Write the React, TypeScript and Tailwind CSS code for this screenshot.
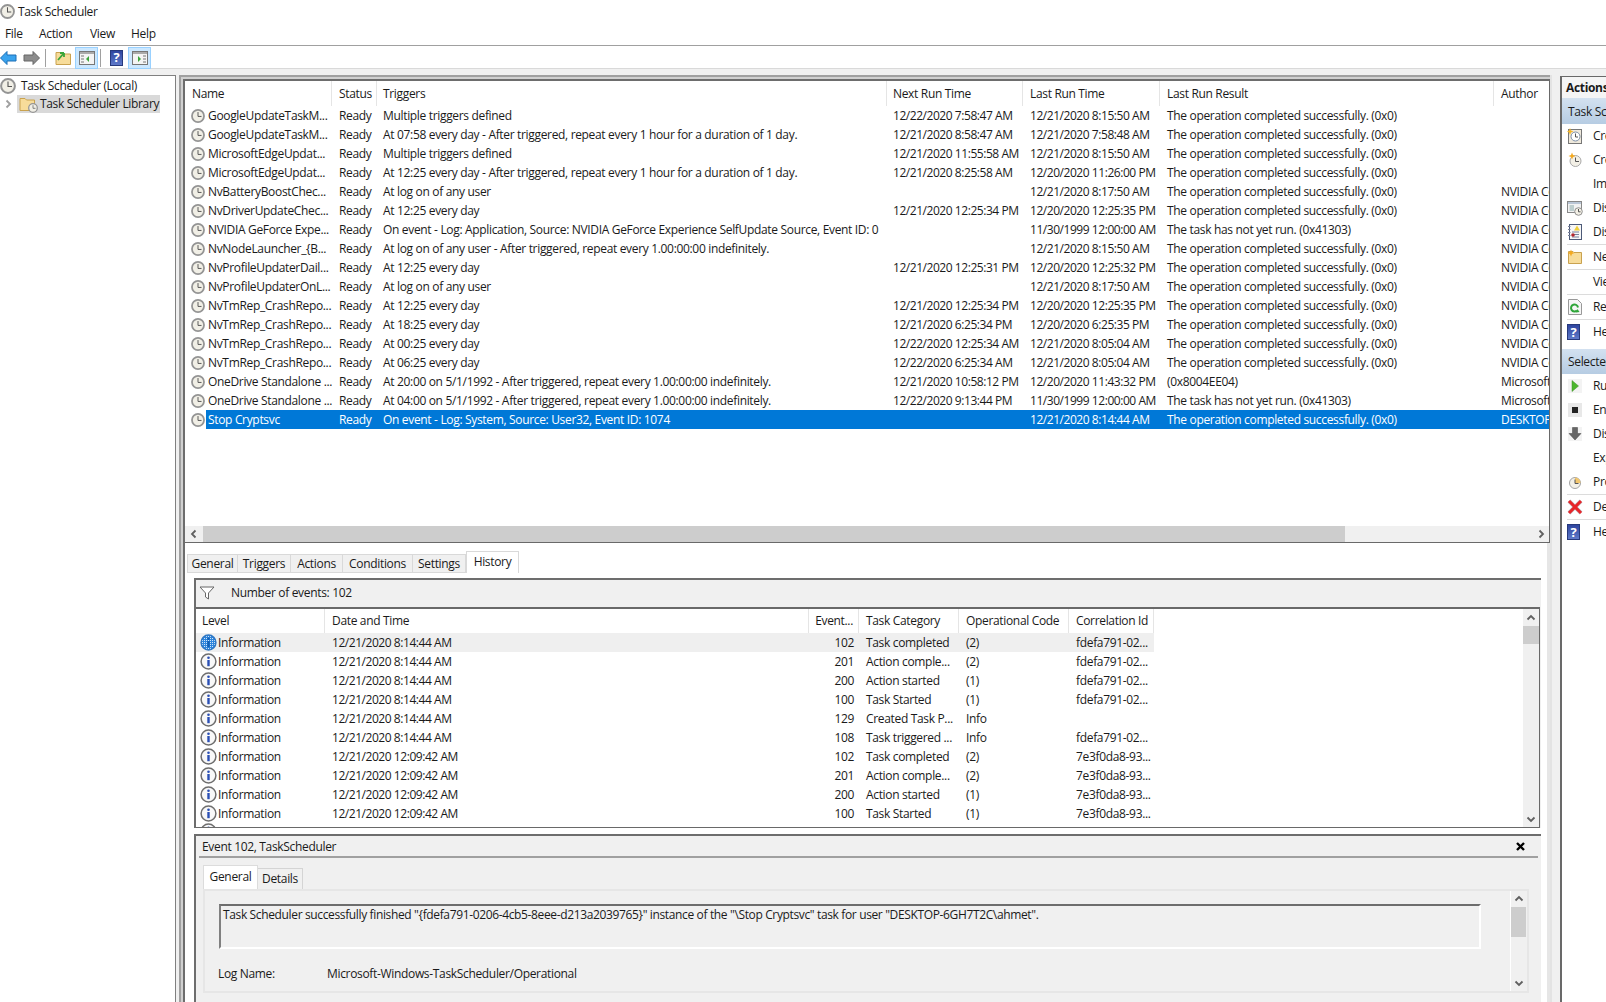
import type { ReactNode } from 'react';

const tasks = [
  ['GoogleUpdateTaskM...', 'Multiple triggers defined', '12/22/2020 7:58:47 AM', '12/21/2020 8:15:50 AM', 'The operation completed successfully. (0x0)', ''],
  ['GoogleUpdateTaskM...', 'At 07:58 every day - After triggered, repeat every 1 hour for a duration of 1 day.', '12/21/2020 8:58:47 AM', '12/21/2020 7:58:48 AM', 'The operation completed successfully. (0x0)', ''],
  ['MicrosoftEdgeUpdat...', 'Multiple triggers defined', '12/21/2020 11:55:58 AM', '12/21/2020 8:15:50 AM', 'The operation completed successfully. (0x0)', ''],
  ['MicrosoftEdgeUpdat...', 'At 12:25 every day - After triggered, repeat every 1 hour for a duration of 1 day.', '12/21/2020 8:25:58 AM', '12/20/2020 11:26:00 PM', 'The operation completed successfully. (0x0)', ''],
  ['NvBatteryBoostChec...', 'At log on of any user', '', '12/21/2020 8:17:50 AM', 'The operation completed successfully. (0x0)', 'NVIDIA Corporation'],
  ['NvDriverUpdateChec...', 'At 12:25 every day', '12/21/2020 12:25:34 PM', '12/20/2020 12:25:35 PM', 'The operation completed successfully. (0x0)', 'NVIDIA Corporation'],
  ['NVIDIA GeForce Expe...', 'On event - Log: Application, Source: NVIDIA GeForce Experience SelfUpdate Source, Event ID: 0', '', '11/30/1999 12:00:00 AM', 'The task has not yet run. (0x41303)', 'NVIDIA Corporation'],
  ['NvNodeLauncher_{B...', 'At log on of any user - After triggered, repeat every 1.00:00:00 indefinitely.', '', '12/21/2020 8:15:50 AM', 'The operation completed successfully. (0x0)', 'NVIDIA Corporation'],
  ['NvProfileUpdaterDail...', 'At 12:25 every day', '12/21/2020 12:25:31 PM', '12/20/2020 12:25:32 PM', 'The operation completed successfully. (0x0)', 'NVIDIA Corporation'],
  ['NvProfileUpdaterOnL...', 'At log on of any user', '', '12/21/2020 8:17:50 AM', 'The operation completed successfully. (0x0)', 'NVIDIA Corporation'],
  ['NvTmRep_CrashRepo...', 'At 12:25 every day', '12/21/2020 12:25:34 PM', '12/20/2020 12:25:35 PM', 'The operation completed successfully. (0x0)', 'NVIDIA Corporation'],
  ['NvTmRep_CrashRepo...', 'At 18:25 every day', '12/21/2020 6:25:34 PM', '12/20/2020 6:25:35 PM', 'The operation completed successfully. (0x0)', 'NVIDIA Corporation'],
  ['NvTmRep_CrashRepo...', 'At 00:25 every day', '12/22/2020 12:25:34 AM', '12/21/2020 8:05:04 AM', 'The operation completed successfully. (0x0)', 'NVIDIA Corporation'],
  ['NvTmRep_CrashRepo...', 'At 06:25 every day', '12/22/2020 6:25:34 AM', '12/21/2020 8:05:04 AM', 'The operation completed successfully. (0x0)', 'NVIDIA Corporation'],
  ['OneDrive Standalone ...', 'At 20:00 on 5/1/1992 - After triggered, repeat every 1.00:00:00 indefinitely.', '12/21/2020 10:58:12 PM', '12/20/2020 11:43:32 PM', '(0x8004EE04)', 'Microsoft Corporation'],
  ['OneDrive Standalone ...', 'At 04:00 on 5/1/1992 - After triggered, repeat every 1.00:00:00 indefinitely.', '12/22/2020 9:13:44 PM', '11/30/1999 12:00:00 AM', 'The task has not yet run. (0x41303)', 'Microsoft Corporation'],
  ['Stop Cryptsvc', 'On event - Log: System, Source: User32, Event ID: 1074', '', '12/21/2020 8:14:44 AM', 'The operation completed successfully. (0x0)', 'DESKTOP-6GH7T2C\\ahmet'],
];

const events = [
  ['12/21/2020 8:14:44 AM', '102', 'Task completed', '(2)', 'fdefa791-02...'],
  ['12/21/2020 8:14:44 AM', '201', 'Action comple...', '(2)', 'fdefa791-02...'],
  ['12/21/2020 8:14:44 AM', '200', 'Action started', '(1)', 'fdefa791-02...'],
  ['12/21/2020 8:14:44 AM', '100', 'Task Started', '(1)', 'fdefa791-02...'],
  ['12/21/2020 8:14:44 AM', '129', 'Created Task P...', 'Info', ''],
  ['12/21/2020 8:14:44 AM', '108', 'Task triggered ...', 'Info', 'fdefa791-02...'],
  ['12/21/2020 12:09:42 AM', '102', 'Task completed', '(2)', '7e3f0da8-93...'],
  ['12/21/2020 12:09:42 AM', '201', 'Action comple...', '(2)', '7e3f0da8-93...'],
  ['12/21/2020 12:09:42 AM', '200', 'Action started', '(1)', '7e3f0da8-93...'],
  ['12/21/2020 12:09:42 AM', '100', 'Task Started', '(1)', '7e3f0da8-93...'],
];

function Clock({ size = 14 }: { size?: number }) {
  return (
    <svg width={size} height={size} viewBox="0 0 16 16" className="shrink-0">
      <circle cx="8" cy="8" r="6.9" fill="#f1efe6" stroke="#949494" strokeWidth="2" />
      <path d="M8 3.5V8.5H12" fill="none" stroke="#555" strokeWidth="1.1" />
    </svg>
  );
}

function InfoIcon({ selected }: { selected?: boolean }) {
  return (
    <svg width="17" height="17" viewBox="0 0 17 17" className="shrink-0">
      <defs>
        <pattern id="dots" width="2" height="2" patternUnits="userSpaceOnUse">
          <rect width="2" height="2" fill="#2f86dd" />
          <rect width="1" height="1" fill="#cfe4f8" />
        </pattern>
      </defs>
      <circle cx="8.5" cy="8.5" r="7.4" fill={selected ? 'url(#dots)' : '#f8f8f8'} stroke={selected ? '#2f78c4' : '#6e6e6e'} strokeWidth="1.5" />
      <circle cx="8.5" cy="4.8" r="1.3" fill={selected ? '#0f5fb5' : '#2a4fb5'} />
      <rect x="7.3" y="7" width="2.4" height="6.2" fill={selected ? '#0f5fb5' : '#2a4fb5'} />
    </svg>
  );
}

function HelpBook({ w = 13, h = 16 }: { w?: number; h?: number }) {
  return (
    <span
      style={{ width: w, height: h }}
      className="flex shrink-0 items-center justify-center border border-[#27397c] bg-gradient-to-b from-[#2f45a0] to-[#5f79c9] text-[13px] leading-none font-bold text-white"
    >
      ?
    </span>
  );
}

function PaneToggle({ right }: { right?: boolean }) {
  return (
    <span className="flex h-[22px] w-[23px] items-center justify-center border border-[#99d1ff] bg-[#cce8ff]">
      <svg width="16" height="14" viewBox="0 0 16 14">
        <rect x="0.5" y="0.5" width="15" height="13" fill="#f4f4f4" stroke="#777" />
        <rect x="1" y="1" width="14" height="2" fill="#aaa" />
        <path d={right ? 'M6 5L9 8L6 11Z' : 'M10 5L7 8L10 11Z'} fill="#3aa53a" />
        <path d={right ? 'M11 5H14M11 8H14M11 11H14' : 'M2 5H5M2 8H5M2 11H5'} stroke="#777" />
      </svg>
    </span>
  );
}

function Chevron({ dir }: { dir: 'up' | 'down' | 'left' | 'right' }) {
  const d = {
    up: 'M1.5 6.5L5 3L8.5 6.5',
    down: 'M1.5 3.5L5 7L8.5 3.5',
    left: 'M6.5 1.5L3 5L6.5 8.5',
    right: 'M3.5 1.5L7 5L3.5 8.5',
  }[dir];
  return (
    <svg width="10" height="10" viewBox="0 0 10 10" className="shrink-0">
      <path d={d} fill="none" stroke="#606060" strokeWidth="1.8" />
    </svg>
  );
}

function Folder({ children }: { children?: ReactNode }) {
  return (
    <svg width="17" height="16" viewBox="0 0 17 16" className="shrink-0">
      <path d="M1 2.5H6L7.5 4H15.5V14.5H1Z" fill="#f7dc9a" stroke="#c9a24f" />
      {children}
    </svg>
  );
}

function ActionIcon({ name }: { name: string }) {
  switch (name) {
    case 'basic':
      return (
        <svg width="16" height="16" viewBox="0 0 16 16">
          <rect x="1.5" y="1.5" width="13" height="14" fill="#efe9dc" stroke="#777" />
          <circle cx="8.5" cy="8.5" r="4.5" fill="#fff" stroke="#7b8ea6" />
          <path d="M8.5 5.5V9H11" fill="none" stroke="#555" />
          <path d="M3 0L4 2.5L6.5 3.5L4 4.5L3 7L2 4.5L0 3.5L2 2.5Z" fill="#f4b72c" />
        </svg>
      );
    case 'task':
      return (
        <svg width="16" height="16" viewBox="0 0 16 16">
          <circle cx="8.5" cy="9" r="5.5" fill="#f3f0e6" stroke="#a9a9a9" />
          <path d="M8.5 5.5V9.5H12" fill="none" stroke="#555" />
          <path d="M5 0.5L6 3L8.5 4L6 5L5 7.5L4 5L1.5 4L4 3Z" fill="#f4a91f" />
        </svg>
      );
    case 'running':
      return (
        <svg width="16" height="16" viewBox="0 0 16 16">
          <rect x="0.5" y="1.5" width="14" height="11" fill="#f2f2f2" stroke="#888" />
          <rect x="1" y="2" width="13" height="2" fill="#b9c6d6" />
          <path d="M2.5 6H7M2.5 8H7M2.5 10H7" stroke="#8aa" />
          <circle cx="11.5" cy="11.5" r="3.8" fill="#f3f0e6" stroke="#8f8f8f" />
          <path d="M11.5 9V11.8H13.5" fill="none" stroke="#555" />
        </svg>
      );
    case 'history':
      return (
        <svg width="16" height="16" viewBox="0 0 16 16">
          <rect x="2.5" y="0.5" width="12" height="15" fill="#f7f7f7" stroke="#4d5a78" />
          <path d="M1 2.5H3.5M1 5.5H3.5M1 8.5H3.5M1 11.5H3.5M5 8H12M5 10.5H12M5 13H12" stroke="#77809a" />
          <path d="M10 1.5L13 6.5H7Z" fill="#f0cf3a" />
          <circle cx="6" cy="11" r="1.8" fill="#b3282d" />
        </svg>
      );
    case 'folder':
      return (
        <svg width="16" height="16" viewBox="0 0 16 16">
          <path d="M1.5 2.5H6L7 3.5H14.5V14.5H1.5Z" fill="#f7dc9a" stroke="#c9a24f" />
          <path d="M4 0.5L5 3L7.5 4L5 5L4 7.5L3 5L0.5 4L3 3Z" fill="#f4a91f" />
        </svg>
      );
    case 'refresh':
      return (
        <svg width="16" height="16" viewBox="0 0 16 16">
          <path d="M1.5 0.5H10.5L14.5 4.5V15.5H1.5Z" fill="#f6f6f6" stroke="#999" />
          <path d="M11 8.5A3.5 3.5 0 1 0 10 11.5" fill="none" stroke="#2fa63a" strokeWidth="2" />
          <path d="M9 13.5L12.5 13L10.5 10Z" fill="#2fa63a" />
        </svg>
      );
    case 'help':
      return <HelpBook w={13} h={16} />;
    case 'run':
      return (
        <svg width="16" height="16" viewBox="0 0 16 16">
          <rect width="14" height="14" x="1" y="1" fill="#f3f3f3" />
          <path d="M5 2.5L11.5 8L5 13.5Z" fill="#4cb62e" stroke="#3c8f25" strokeWidth="0.5" />
        </svg>
      );
    case 'end':
      return (
        <svg width="16" height="16" viewBox="0 0 16 16">
          <rect width="14" height="14" x="1" y="1" fill="#e8e8e8" />
          <rect x="5" y="5" width="6" height="6" fill="#222" />
        </svg>
      );
    case 'disable':
      return (
        <svg width="16" height="16" viewBox="0 0 16 16">
          <rect width="14" height="14" x="1" y="1" fill="#f3f3f3" />
          <path d="M5.5 1.5H10.5V7.5H14L8 14L2 7.5H5.5Z" fill="#666" stroke="#444" strokeWidth="0.5" />
        </svg>
      );
    case 'props':
      return (
        <svg width="16" height="16" viewBox="0 0 16 16">
          <circle cx="8" cy="9" r="5.5" fill="#f3f0e6" stroke="#a3a3a3" />
          <path d="M8 3.5A5.5 5.5 0 0 1 13.5 9H8Z" fill="#f2c66d" />
          <path d="M8 5.5V9.5H11.5" fill="none" stroke="#555" />
        </svg>
      );
    case 'delete':
      return (
        <svg width="16" height="16" viewBox="0 0 16 16">
          <path d="M2 2L14 14M14 2L2 14" stroke="#b9bcc2" strokeWidth="4" />
          <path d="M2 2L14 14M14 2L2 14" stroke="#e8262a" strokeWidth="3" />
        </svg>
      );
    default:
      return null;
  }
}

const mainActions: [string, string, boolean?][] = [
  ['basic', 'Create Basic Task...'],
  ['task', 'Create Task...'],
  ['', 'Import Task...'],
  ['running', 'Display All Running Tasks'],
  ['history', 'Disable All Tasks History', true],
  ['folder', 'New Folder...', true],
  ['', 'View', true],
  ['refresh', 'Refresh', true],
  ['help', 'Help'],
];

const selectedActions: [string, string, boolean?][] = [
  ['run', 'Run'],
  ['end', 'End'],
  ['disable', 'Disable'],
  ['', 'Export...'],
  ['props', 'Properties', true],
  ['delete', 'Delete', true],
  ['help', 'Help'],
];

function ActionList({ items }: { items: [string, string, boolean?][] }) {
  return (
    <div>
      {items.map(([icon, label, sep], i) => (
        <div key={i}>
          <div className="flex h-[24px] items-center pl-[5px]">
            <span className="flex w-[26px] shrink-0 items-center">{icon && <ActionIcon name={icon} />}</span>
            <span className="whitespace-nowrap">{label}</span>
          </div>
          {sep && <div className="ml-[5px] h-px bg-[#dcdcdc]" />}
        </div>
      ))}
    </div>
  );
}

export default function App() {
  return (
    <div className="flex h-[1002px] w-[1606px] flex-col overflow-hidden bg-white font-['Open_Sans',sans-serif] text-[12px] tracking-[-0.33px] text-[#1a1a1a]">
      <div className="flex h-[23px] items-center gap-[3px]">
        <Clock size={15} />
        <span>Task Scheduler</span>
      </div>

      <div className="flex h-[23px] items-center border-b border-[#a0a0a0] pl-[5px]">
        <span className="w-[34px]">File</span>
        <span className="w-[51px]">Action</span>
        <span className="w-[41px]">View</span>
        <span>Help</span>
      </div>

      <div className="flex h-[23px] items-center border-b border-[#d9d9d9] pt-[1px]">
        <svg width="17" height="14" viewBox="0 0 17 14">
          <path d="M7 0.5V4H16V10H7V13.5L0.5 7Z" fill="#39a3ee" stroke="#1c6fb5" />
        </svg>
        <svg width="17" height="14" viewBox="0 0 17 14" className="ml-[6px]">
          <path d="M10 0.5V4H1V10H10V13.5L16.5 7Z" fill="#8d8d8d" stroke="#666" />
        </svg>
        <span className="ml-[5px] h-[18px] w-px bg-[#a0a0a0]" />
        <span className="ml-[9px]">
          <Folder>
            <path d="M3 10L9 3M9 3H5M9 3V7" fill="none" stroke="#3aa53a" strokeWidth="1.8" />
          </Folder>
        </span>
        <span className="ml-[3px]">
          <PaneToggle />
        </span>
        <span className="ml-[2px] h-[18px] w-px bg-[#a0a0a0]" />
        <span className="ml-[9px]">
          <HelpBook w={13} h={16} />
        </span>
        <span className="ml-[5px]">
          <PaneToggle right />
        </span>
      </div>

      <div className="flex min-h-0 flex-1 bg-[#f0f0f0] pt-[6px]">
        <div className="w-[176px] shrink-0 border-t border-r border-[#808080] bg-white pt-[1px]">
          <div className="flex h-[18px] items-center gap-[5px]">
            <Clock size={16} />
            <span>Task Scheduler (Local)</span>
          </div>
          <div className="flex h-[18px] items-center">
            <span className="flex w-[15px] justify-center opacity-60">
              <Chevron dir="right" />
            </span>
            <div className="ml-[2px] flex h-[18px] w-[143px] items-center gap-[4px] bg-[#d9d9d9] pl-[2px]">
              <span className="relative">
                <Folder />
                <span className="absolute right-[-2px] bottom-[-1px]">
                  <Clock size={10} />
                </span>
              </span>
              <span className="whitespace-nowrap">Task Scheduler Library</span>
            </div>
          </div>
        </div>

        <div className="ml-[3px] w-[1371px] shrink-0 border-t-2 border-l-2 border-[#a0a0a0]">
          <div className="h-full border-t-2 border-l-2 border-[#d0d0d0]">
            <div className="flex h-full flex-col border-t-2 border-l-2 border-[#6d6d6d] bg-white">
              <div className="h-[462px] shrink-0 overflow-hidden border-r border-b border-[#696969]">
                <div className="flex h-[25px] items-center whitespace-nowrap">
                  <span className="flex h-full w-[147px] items-center border-r border-[#e5e5e5] pl-[7px]">Name</span>
                  <span className="flex h-full w-[45px] items-center border-r border-[#e5e5e5] pl-[7px]">Status</span>
                  <span className="flex h-full w-[510px] items-center border-r border-[#e5e5e5] pl-[6px]">Triggers</span>
                  <span className="flex h-full w-[136px] items-center border-r border-[#e5e5e5] pl-[6px]">Next Run Time</span>
                  <span className="flex h-full w-[137px] items-center border-r border-[#e5e5e5] pl-[7px]">Last Run Time</span>
                  <span className="flex h-full w-[334px] items-center border-r border-[#e5e5e5] pl-[7px]">Last Run Result</span>
                  <span className="flex h-full items-center pl-[7px]">Author</span>
                </div>
                <div className="h-[420px]">
                  {tasks.map((t, i) => {
                    const sel = i === tasks.length - 1;
                    return (
                      <div key={i} className="flex h-[19px] items-center whitespace-nowrap">
                        <span className="flex w-[21px] shrink-0 justify-end pr-[1px]">
                          <Clock />
                        </span>
                        <div className={sel ? 'flex h-full min-w-0 flex-1 items-center bg-[#0078d7] text-white' : 'flex h-full min-w-0 flex-1 items-center'}>
                          <span className="w-[126px] shrink-0 overflow-hidden pl-[2px]">{t[0]}</span>
                          <span className="w-[45px] shrink-0 pl-[7px]">Ready</span>
                          <span className="w-[510px] shrink-0 overflow-hidden pl-[6px]">{t[1]}</span>
                          <span className="w-[136px] shrink-0 pl-[6px] tracking-[-0.45px]">{t[2]}</span>
                          <span className="w-[137px] shrink-0 pl-[7px] tracking-[-0.45px]">{t[3]}</span>
                          <span className="w-[334px] shrink-0 pl-[7px]">{t[4]}</span>
                          <span className="min-w-0 flex-1 overflow-hidden pl-[7px]">{t[5]}</span>
                        </div>
                      </div>
                    );
                  })}
                </div>
                <div className="flex h-[16px] items-center bg-[#f0f0f0]">
                  <span className="flex w-[18px] justify-center">
                    <Chevron dir="left" />
                  </span>
                  <div className="h-full w-[1142px] bg-[#cdcdcd]" />
                  <span className="ml-auto flex w-[16px] justify-center">
                    <Chevron dir="right" />
                  </span>
                </div>
              </div>

              <div className="flex min-h-0 flex-1 flex-col border-r-[3px] border-[#e6e6e6] pt-[9px]">
                <div className="flex h-[21px] items-end pl-[2px]">
                  <span className="flex h-[19px] w-[51px] items-center justify-center border border-[#d9d9d9] bg-[#f0f0f0]">General</span>
                  <span className="flex h-[19px] w-[53px] items-center justify-center border-y border-r border-[#d9d9d9] bg-[#f0f0f0]">Triggers</span>
                  <span className="flex h-[19px] w-[52px] items-center justify-center border-y border-r border-[#d9d9d9] bg-[#f0f0f0]">Actions</span>
                  <span className="flex h-[19px] w-[70px] items-center justify-center border-y border-r border-[#d9d9d9] bg-[#f0f0f0]">Conditions</span>
                  <span className="flex h-[19px] w-[53px] items-center justify-center border-y border-r border-[#d9d9d9] bg-[#f0f0f0]">Settings</span>
                  <span className="flex h-[22px] w-[53px] items-start justify-center border-x border-t border-[#d9d9d9] bg-white pt-[1px]">History</span>
                </div>

                <div className="mt-[5px] ml-[9px] w-[1347px] shrink-0 border-t-2 border-l-2 border-[#6d6d6d] bg-[#f0f0f0]">
                  <div className="flex h-[27px] items-center pb-[2px] pl-[3px]">
                    <svg width="16" height="14" viewBox="0 0 16 14">
                      <path d="M1 1H15L9.5 7V13L6.5 11V7Z" fill="#fff" stroke="#666" />
                    </svg>
                    <span className="ml-[16px]">Number of events: 102</span>
                  </div>
                  <div className="mr-px flex h-[221px] overflow-hidden border-t-2 border-r border-b border-[#696969] bg-white">
                    <div className="min-w-0 flex-1 overflow-hidden">
                      <div className="flex h-[24px] items-center whitespace-nowrap">
                        <span className="flex h-full w-[129px] items-center border-r border-[#e5e5e5] pl-[6px]">Level</span>
                        <span className="flex h-full w-[484px] items-center border-r border-[#e5e5e5] pl-[7px]">Date and Time</span>
                        <span className="flex h-full w-[50px] items-center justify-end border-r border-[#e5e5e5] pr-[5px]">Event...</span>
                        <span className="flex h-full w-[100px] items-center border-r border-[#e5e5e5] pl-[7px]">Task Category</span>
                        <span className="flex h-full w-[110px] items-center border-r border-[#e5e5e5] pl-[7px]">Operational Code</span>
                        <span className="flex h-full w-[85px] items-center border-r border-[#e5e5e5] pl-[7px]">Correlation Id</span>
                      </div>
                      {events.map((e, i) => (
                        <div key={i} className={i === 0 ? 'flex h-[19px] w-[958px] items-center whitespace-nowrap bg-[#efefef]' : 'flex h-[19px] w-[958px] items-center whitespace-nowrap'}>
                          <span className="flex w-[129px] shrink-0 items-center gap-[1px] pl-[4px]">
                            <InfoIcon selected={i === 0} />
                            Information
                          </span>
                          <span className="w-[484px] shrink-0 pl-[7px] tracking-[-0.45px]">{e[0]}</span>
                          <span className="w-[50px] shrink-0 pr-[5px] text-right">{e[1]}</span>
                          <span className="w-[100px] shrink-0 overflow-hidden pl-[7px]">{e[2]}</span>
                          <span className="w-[110px] shrink-0 pl-[7px]">{e[3]}</span>
                          <span className="w-[85px] shrink-0 pl-[7px]">{e[4]}</span>
                        </div>
                      ))}
                      <div className="h-[5px] overflow-hidden pl-[4px]">
                        <InfoIcon />
                      </div>
                    </div>
                    <div className="flex w-[16px] shrink-0 flex-col items-center bg-[#f0f0f0]">
                      <span className="flex h-[17px] items-center">
                        <Chevron dir="up" />
                      </span>
                      <div className="h-[18px] w-full bg-[#cdcdcd]" />
                      <span className="mt-auto flex h-[17px] items-center">
                        <Chevron dir="down" />
                      </span>
                    </div>
                  </div>
                </div>

                <div className="mt-[6px] ml-[9px] flex min-h-0 w-[1347px] flex-1 flex-col border-t-2 border-l-2 border-[#6d6d6d] bg-[#f0f0f0]">
                  <div className="mx-[3px] flex h-[22px] shrink-0 items-center justify-between border-b-2 border-[#a0a0a0] pt-[1px] pr-[12px] pl-[3px]">
                    <span>Event 102, TaskScheduler</span>
                    <svg width="11" height="11" viewBox="0 0 11 11">
                      <path d="M2 2L9 9M9 2L2 9" stroke="#000" strokeWidth="2.4" />
                    </svg>
                  </div>
                  <div className="ml-[7px] flex h-[31px] shrink-0 items-end pt-[7px]">
                    <span className="flex h-[24px] w-[55px] items-start justify-center border-x border-t border-[#dcdcdc] bg-white pt-[2px]">General</span>
                    <span className="flex h-[21px] w-[45px] items-center justify-center border-t border-r border-[#d4d4d4]">Details</span>
                  </div>
                  <div className="ml-[7px] flex h-[104px] w-[1326px] shrink-0 border-2 border-[#e6e6e6]">
                    <div className="min-w-0 flex-1 pt-[13px] pl-[14px]">
                      <div className="h-[45px] w-[1262px] border-2 border-t-[#6d6d6d] border-r-white border-b-white border-l-[#808080] pl-[2px] tracking-[-0.36px]">
                        Task Scheduler successfully finished "{'{'}fdefa791-0206-4cb5-8eee-d213a2039765{'}'}" instance of the "\Stop Cryptsvc" task for user "DESKTOP-6GH7T2C\ahmet".
                      </div>
                      <div className="mt-[16px] -ml-px flex items-center">
                        <span className="w-[109px]">Log Name:</span>
                        <span>Microsoft-Windows-TaskScheduler/Operational</span>
                      </div>
                    </div>
                    <div className="mr-px flex w-[16px] shrink-0 flex-col items-center border-l border-white">
                      <span className="flex h-[16px] items-center">
                        <Chevron dir="up" />
                      </span>
                      <div className="h-[30px] w-full bg-[#cdcdcd]" />
                      <span className="mt-auto flex h-[16px] items-center">
                        <Chevron dir="down" />
                      </span>
                    </div>
                  </div>
                </div>
              </div>
            </div>
          </div>
        </div>

        <div className="w-[10px] shrink-0 border-l-2 border-[#e3e3e3]" />

        <div className="mt-px min-w-0 flex-1 overflow-hidden border-t border-l-2 border-[#696969] bg-white">
          <div className="flex h-[21px] items-center bg-[#f5f5f5] pl-[4px] font-bold whitespace-nowrap">Actions</div>
          <div className="flex h-[26px] items-center bg-gradient-to-b from-[#d3e1f0] to-[#b6cce3] pt-[2px] pl-[6px] whitespace-nowrap">Task Scheduler Library</div>
          <ActionList items={mainActions} />
          <div className="mt-[5px] flex h-[25px] items-center bg-gradient-to-b from-[#d3e1f0] to-[#b6cce3] pl-[6px] whitespace-nowrap">Selected Item</div>
          <ActionList items={selectedActions} />
        </div>
      </div>
    </div>
  );
}
